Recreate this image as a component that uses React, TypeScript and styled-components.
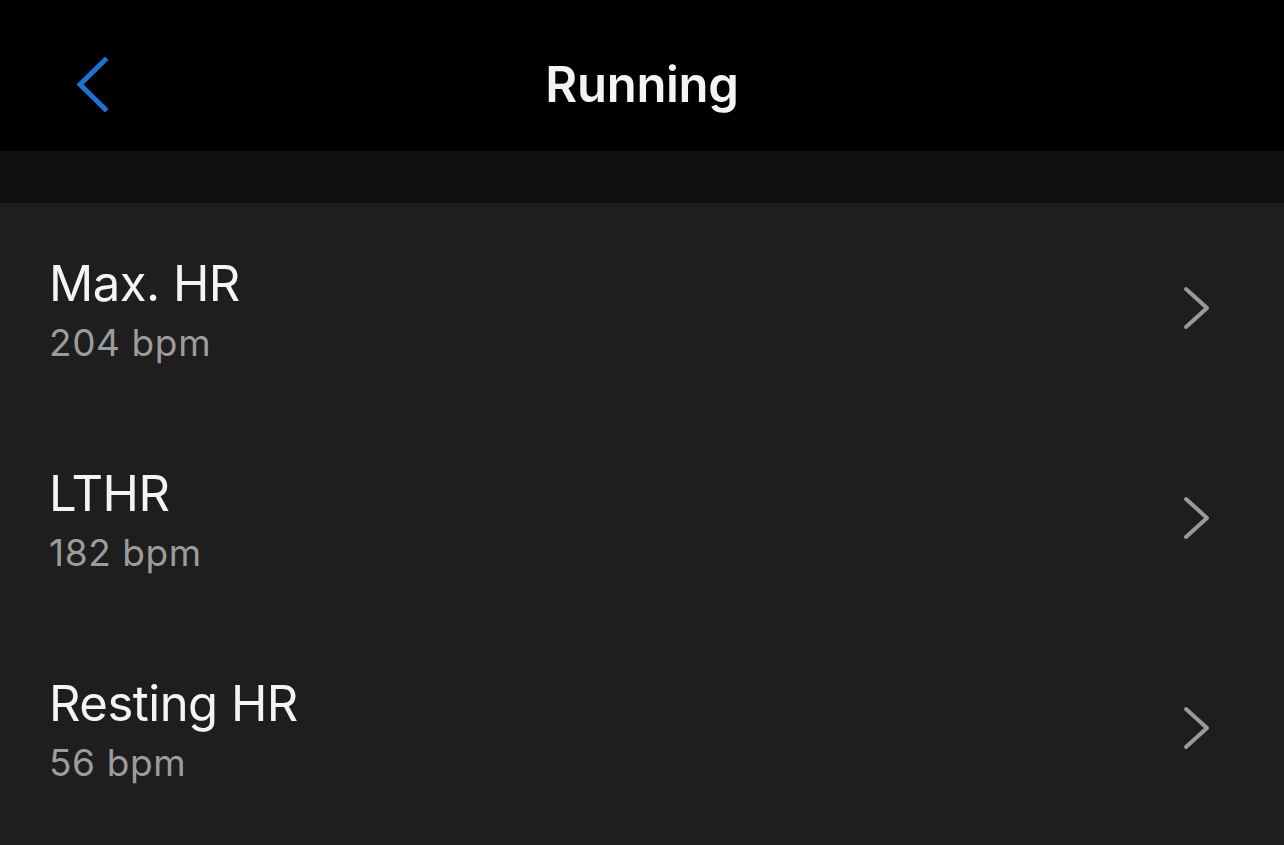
import React from "react";
import styled, { createGlobalStyle } from "styled-components";

const GlobalStyle = createGlobalStyle`
  html, body {
    margin: 0;
    padding: 0;
    background: #1e1e1e;
    font-family: Inter, "Noto Sans", "Liberation Sans", sans-serif;
  }
`;

const Page = styled.div`
  width: 1284px;
  height: 845px;
  overflow: hidden;
  background: #1e1e1e;
  display: flex;
  flex-direction: column;
`;

const Header = styled.header`
  box-sizing: border-box;
  height: 151px;
  padding-top: 18px;
  background: #000;
  display: grid;
  grid-template-columns: 180px 1fr 180px;
  align-items: center;
`;

const BackButton = styled.button`
  background: none;
  border: 0;
  padding: 0 0 0 75px;
  display: flex;
  align-items: center;
  cursor: pointer;
`;

const Title = styled.h1`
  margin: 0;
  text-align: center;
  color: #f4f4f4;
  font-size: 49px;
  font-weight: 600;
  letter-spacing: -0.3px;
`;

const Band = styled.div`
  height: 52px;
  background: #111111;
`;

const List = styled.ul`
  list-style: none;
  margin: 0;
  padding: 0;
`;

const Row = styled.li`
  height: 210px;
  display: flex;
  align-items: center;
  justify-content: space-between;
  padding: 0 72px 0 49px;
  cursor: pointer;
`;

const TextBlock = styled.div`
  display: flex;
  flex-direction: column;
  gap: 10px;
  padding-top: 3px;
`;

const Label = styled.span`
  color: #f4f4f4;
  font-size: 49px;
  line-height: 56px;
  font-weight: 400;
  letter-spacing: -0.5px;
`;

const Value = styled.span`
  color: #9c9c9c;
  font-size: 37px;
  line-height: 42px;
  font-weight: 400;
  letter-spacing: 0.6px;
`;

const items = [
  { label: "Max. HR", value: "204 bpm" },
  { label: "LTHR", value: "182 bpm" },
  { label: "Resting HR", value: "56 bpm" },
];

export default function App() {
  return (
    <Page>
      <GlobalStyle />
      <Header>
        <BackButton aria-label="Back">
          <svg width="34" height="56" viewBox="0 0 34 56">
            <path d="M30 3 L5 27.5 L30 52" fill="none" stroke="#1b73d3" strokeWidth="5" strokeLinecap="square" />
          </svg>
        </BackButton>
        <Title>Running</Title>
        <div />
      </Header>
      <Band />
      <List>
        {items.map((it) => (
          <Row key={it.label}>
            <TextBlock>
              <Label>{it.label}</Label>
              <Value>{it.value}</Value>
            </TextBlock>
            <svg width="30" height="46" viewBox="0 0 30 46">
              <path d="M4 4 L25 23 L4 42" fill="none" stroke="#9a9a9a" strokeWidth="4" strokeLinecap="round" strokeLinejoin="round" />
            </svg>
          </Row>
        ))}
      </List>
    </Page>
  );
}
